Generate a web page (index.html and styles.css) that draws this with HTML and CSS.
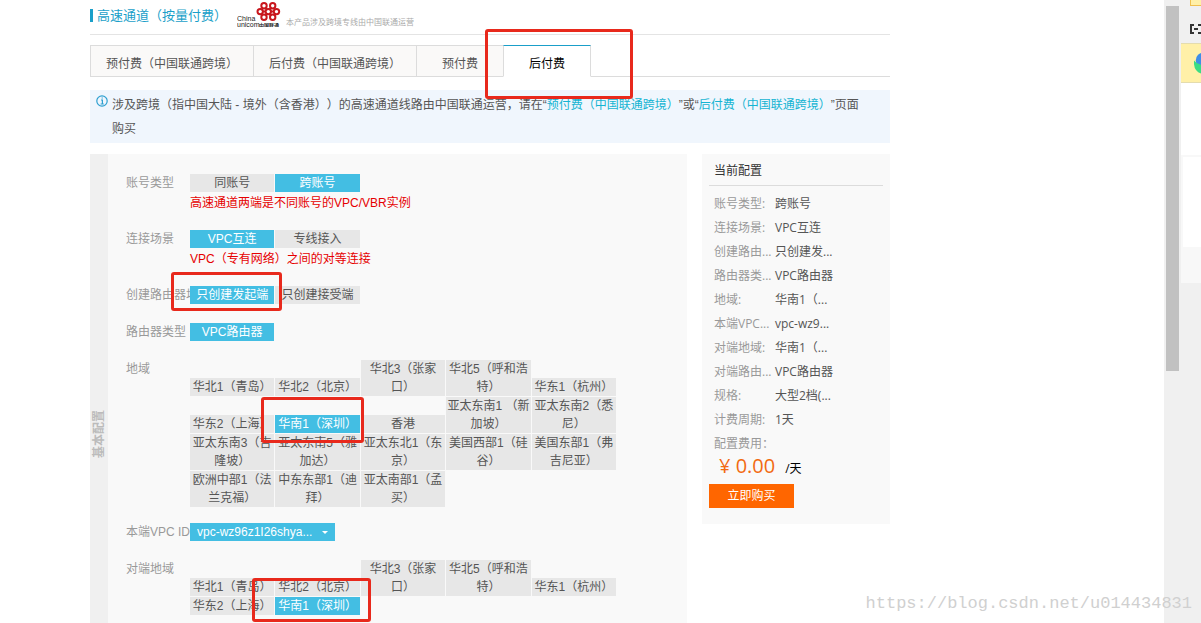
FILE: index.html
```html
<!DOCTYPE html>
<html lang="zh-CN">
<head>
<meta charset="utf-8">
<title>高速通道（按量付费）</title>
<link rel="stylesheet" href="styles.css">
</head>
<body>
<div class="screen">
  <main class="page">
    <header class="page-head">
      <h1 class="page-title">高速通道（按量付费）</h1>
      <svg class="logo" viewBox="0 0 44 26" role="img" aria-label="China unicom中国联通">
        <g fill="none" stroke="#c8161d" stroke-width="2">
          <circle cx="27" cy="4.7" r="2.7"/><circle cx="35.7" cy="4.7" r="2.7"/>
          <circle cx="23.2" cy="10.6" r="2.7"/><circle cx="31.3" cy="10.6" r="2.7"/><circle cx="39.5" cy="10.6" r="2.7"/>
          <circle cx="27" cy="16.3" r="2.7"/><circle cx="35.7" cy="16.3" r="2.7"/>
          <path d="M28.8 6.7l1 1.6M33.8 6.7l-1 1.6M28.8 14.4l1-1.6M33.8 14.4l-1-1.6M25.6 10.6h3M34 10.6h3"/>
        </g>
        <text class="logo-text" x="0" y="20">China</text>
        <text class="logo-text" x="0" y="26">unicom</text>
        <text class="logo-cn" x="22" y="26">中国联通</text>
      </svg>
      <span class="head-note">本产品涉及跨境专线由中国联通运营</span>
    </header>

    <nav class="tabs">
      <button class="tab" type="button">预付费（中国联通跨境）</button>
      <button class="tab" type="button">后付费（中国联通跨境）</button>
      <button class="tab" type="button">预付费</button>
      <button class="tab tab-active" type="button">后付费</button>
    </nav>

    <div class="notice">
      <svg class="notice-icon" viewBox="0 0 12 12" aria-hidden="true">
        <circle cx="6" cy="6" r="5.2" fill="none" stroke="#2d9fd0" stroke-width="1.2"/>
        <path d="M5 5h1.4v4M4.6 9h3.2M5.6 3h1.2" fill="none" stroke="#2d9fd0" stroke-width="1.2"/>
      </svg>
      <p class="notice-text">涉及跨境（指中国大陆 - 境外（含香港））的高速通道线路由中国联通运营，请在“<a href="#">预付费（中国联通跨境）</a>”或“<a href="#">后付费（中国联通跨境）</a>”页面购买</p>
    </div>

    <div class="columns">
      <section class="config">
        <h2 class="config-side"><span>基本配置</span></h2>
        <div class="config-body">
          <div class="row">
            <span class="label">账号类型</span>
            <div class="control">
              <div class="options">
                <button class="opt" type="button">同账号</button>
                <button class="opt opt-on" type="button">跨账号</button>
              </div>
              <p class="hint">高速通道两端是不同账号的VPC/VBR实例</p>
            </div>
          </div>
          <div class="row">
            <span class="label">连接场景</span>
            <div class="control">
              <div class="options">
                <button class="opt opt-on" type="button">VPC互连</button>
                <button class="opt" type="button">专线接入</button>
              </div>
              <p class="hint">VPC（专有网络）之间的对等连接</p>
            </div>
          </div>
          <div class="row">
            <span class="label">创建路由器场</span>
            <div class="control options">
              <button class="opt opt-on" type="button">只创建发起端</button>
              <button class="opt" type="button">只创建接受端</button>
            </div>
          </div>
          <div class="row">
            <span class="label">路由器类型</span>
            <div class="control options">
              <button class="opt opt-on" type="button">VPC路由器</button>
            </div>
          </div>
          <div class="row row-regions">
            <span class="label">地域</span>
            <div class="control options">
              <button class="opt" type="button">华北1（青岛）</button>
              <button class="opt" type="button">华北2（北京）</button>
              <button class="opt" type="button">华北3（张家口）</button>
              <button class="opt" type="button">华北5（呼和浩特）</button>
              <button class="opt" type="button">华东1（杭州）</button>
              <button class="opt" type="button">华东2（上海）</button>
              <button class="opt opt-on" type="button">华南1（深圳）</button>
              <button class="opt" type="button">香港</button>
              <button class="opt" type="button">亚太东南1 （新加坡）</button>
              <button class="opt" type="button">亚太东南2（悉尼）</button>
              <button class="opt" type="button">亚太东南3（吉隆坡）</button>
              <button class="opt" type="button">亚太东南5（雅加达）</button>
              <button class="opt" type="button">亚太东北1（东京）</button>
              <button class="opt" type="button">美国西部1（硅谷）</button>
              <button class="opt" type="button">美国东部1（弗吉尼亚）</button>
              <button class="opt" type="button">欧洲中部1（法兰克福）</button>
              <button class="opt" type="button">中东东部1（迪拜）</button>
              <button class="opt" type="button">亚太南部1（孟买）</button>
            </div>
          </div>
          <div class="row">
            <label class="label" for="vpc">本端VPC ID</label>
            <div class="control select-box">
              <select id="vpc" class="select"><option>vpc-wz96z1I26shya...</option></select>
              <svg class="caret" viewBox="0 0 6 3" aria-hidden="true"><path d="M0 0h6L3 3z" fill="#fff"/></svg>
            </div>
          </div>
          <div class="row">
            <span class="label">对端地域</span>
            <div class="control options">
              <button class="opt" type="button">华北1（青岛）</button>
              <button class="opt" type="button">华北2（北京）</button>
              <button class="opt" type="button">华北3（张家口）</button>
              <button class="opt" type="button">华北5（呼和浩特）</button>
              <button class="opt" type="button">华东1（杭州）</button>
              <button class="opt" type="button">华东2（上海）</button>
              <button class="opt opt-on" type="button">华南1（深圳）</button>
            </div>
          </div>
        </div>
      </section>

      <aside class="summary">
        <h2 class="summary-title">当前配置</h2>
        <dl class="summary-list">
          <dt>账号类型:</dt><dd>跨账号</dd>
          <dt>连接场景:</dt><dd>VPC互连</dd>
          <dt>创建路由...</dt><dd>只创建发...</dd>
          <dt>路由器类...</dt><dd>VPC路由器</dd>
          <dt>地域:</dt><dd>华南1（...</dd>
          <dt>本端VPC...</dt><dd>vpc-wz9...</dd>
          <dt>对端地域:</dt><dd>华南1（...</dd>
          <dt>对端路由...</dt><dd>VPC路由器</dd>
          <dt>规格:</dt><dd>大型2档(...</dd>
          <dt>计费周期:</dt><dd>1天</dd>
          <dt>配置费用：</dt>
        </dl>
        <p class="price"><span class="price-num">¥ 0.00</span><span>/天</span></p>
        <button class="buy" type="button">立即购买</button>
      </aside>
    </div>
  </main>

  <div class="scrollbar"><div class="thumb"></div></div>

  <div class="side-window">
    <div class="side-bar">
      <span class="side-tab"></span>
      <svg class="side-icon" viewBox="0 0 12 12" aria-hidden="true"><path d="M5 2H2v8h3M9 2h3M9 10h3M5 6h4" fill="none" stroke="#333" stroke-width="2"/></svg>
    </div>
    <div class="side-item">
      <svg class="side-avatar" viewBox="0 0 8 26" aria-hidden="true"><circle cx="11" cy="10" r="9" fill="#3f8ee8"/><path d="M0 10q3 4 8 5v10Q-1 22 0 10z" fill="#3bdc84"/></svg>
    </div>
    <div class="side-blank"></div>
    <div class="side-panel"></div>
    <div class="side-foot"></div>
  </div>

  <div class="mark mark-tab"></div>
  <div class="mark mark-initiator"></div>
  <div class="mark mark-region"></div>
  <div class="mark mark-peer"></div>
  <div class="watermark">https://blog.csdn.net/u014434831</div>
</div>
</body>
</html>
```

FILE: styles.css
```css
* { box-sizing: border-box; }

body, h1, h2, p, dl, dd { margin: 0; }

body {
  font: 12px/18px "Liberation Sans", "Noto Sans CJK SC", sans-serif;
  color: #555;
  background: #fff;
  text-spacing-trim: space-all;
}

button, select { font: inherit; text-spacing-trim: inherit; }

.screen {
  position: relative;
  display: flex;
  height: 100vh;
  overflow: hidden;
}

.page {
  flex: 1;
  min-width: 0;
  padding-left: 90px;
}

.page > * { max-width: 800px; }

.page-head {
  display: flex;
  align-items: flex-end;
  height: 35px;
  border-bottom: 1px solid #e4e4e4;
}

.page-title {
  align-self: flex-start;
  margin-top: 9px;
  padding-left: 4px;
  border-left: 3px solid #1a9fc9;
  font-size: 13px;
  line-height: 13px;
  font-weight: 400;
  color: #1a9fc9;
}

.logo {
  width: 44px;
  height: 26px;
  margin: 0 5px 7px 10px;
}

.logo-text { font-size: 7px; fill: #222; }
.logo-cn { font-size: 5px; font-weight: 700; fill: #222; }

.head-note {
  padding-bottom: 2px;
  font-size: 8px;
  color: #aaa;
}

.tabs {
  display: flex;
  margin-top: 10px;
  height: 32px;
  border-bottom: 1px solid #dcdcdc;
}

.tab {
  min-width: 87px;
  height: 32px;
  padding: 6px 15px 0;
  border: 1px solid #dcdcdc;
  border-right-width: 0;
  background: #faf9f8;
  color: #555;
}

.tab-active {
  min-width: 88px;
  border-top-color: #1a9fc9;
  border-right-width: 1px;
  border-bottom-color: #fff;
  background: #fff;
  color: #000;
}

.notice {
  display: flex;
  align-items: flex-start;
  gap: 4px;
  margin-top: 13px;
  padding: 3px 24px 2px 6px;
  background: #f0f6fd;
}

.notice-icon { flex: none; width: 12px; height: 12px; margin-top: 2px; }
.notice-text { line-height: 24px; }
.notice-text a { color: #14b4d2; text-decoration: none; }

.columns {
  display: flex;
  align-items: flex-start;
  gap: 15px;
  margin-top: 11px;
}

.config {
  display: flex;
  flex: 1;
  min-width: 0;
  min-height: 560px;
  background: #f9f9f9;
}

.config-side {
  display: flex;
  align-items: center;
  justify-content: center;
  width: 18px;
  background: #f0f0f0;
  font-size: 12px;
  line-height: 18px;
  color: #bbb;
}

.config-side span {
  writing-mode: vertical-rl;
  text-orientation: sideways;
  transform: rotate(180deg);
}

.config-body {
  display: flex;
  flex: 1;
  flex-direction: column;
  gap: 19px;
  min-width: 0;
  padding: 20px 18px;
}

.row { display: flex; }
.row-regions { margin-bottom: -3px; }

.label {
  flex: none;
  width: 64px;
  overflow: hidden;
  white-space: nowrap;
  color: #999;
}

.control { width: 426px; }

.options {
  display: grid;
  grid-template-columns: repeat(5, 1fr);
  align-items: end;
  gap: 1px;
}

.opt {
  min-height: 18px;
  padding: 0;
  border: 0;
  background: #e7e7e7;
  color: #555;
}

.opt-on { background: #43bee3; color: #fff; }

.hint { margin-top: 4px; line-height: 15px; color: #e60000; }

.select-box { position: relative; width: 145px; }

.select {
  appearance: none;
  display: block;
  width: 100%;
  height: 18px;
  padding: 0 7px;
  border: 0;
  border-radius: 0;
  background: #43bee3;
  color: #fff;
}

.caret {
  position: absolute;
  top: 8px;
  right: 7px;
  width: 6px;
  height: 3px;
}

.summary {
  width: 188px;
  padding: 8px 7px 16px;
  background: #f9f9f9;
  font-family: "Open Sans", "Noto Sans CJK SC", sans-serif;
}

.summary-title {
  padding: 0 5px 5px;
  border-bottom: 1px solid #dcdcdc;
  font-size: 12px;
  font-weight: 400;
  color: #333;
}

.summary-list {
  display: grid;
  grid-template-columns: 61px 1fr;
  padding: 6px 5px 0;
  line-height: 24px;
  white-space: nowrap;
}

.summary-list dt { color: #999; }

.price {
  display: flex;
  align-items: baseline;
  gap: 10px;
  padding-left: 10px;
  line-height: 20px;
  color: #000;
}

.price-num { font-size: 20px; color: #f26a11; }

.buy {
  display: block;
  width: 85px;
  height: 24px;
  margin-top: 5px;
  padding: 0;
  border: 0;
  background: #f60;
  color: #fff;
}

.scrollbar {
  width: 17px;
  padding: 6px 2px 0;
  background: #f0f0f0;
}

.thumb { height: 365px; background: #c1c1c1; }

.side-window {
  display: flex;
  flex-direction: column;
  width: 20px;
  background: #fff;
}

.side-bar {
  display: flex;
  flex-direction: column;
  align-items: flex-end;
  gap: 17px;
  height: 43px;
  background: #f0f0f0;
}

.side-tab {
  width: 11px;
  height: 6px;
  border: 1px solid #f0c050;
  border-width: 0 0 1px 1px;
  background: #fff0a8;
}

.side-icon { width: 12px; height: 12px; }

.side-item {
  display: flex;
  align-items: center;
  justify-content: flex-end;
  height: 40px;
  border: 1px solid #e4dcae;
  border-width: 1px 0;
  background: #fff0a8;
}

.side-avatar { width: 7px; height: 26px; }
.side-blank { height: 72px; }

.side-panel {
  height: 128px;
  border: 2px solid #f8f8f8;
  border-bottom-width: 36px;
  border-right: 0;
}

.side-foot { flex: 1; background: #f0f0f0; }

.mark {
  position: absolute;
  border: 3px solid #e8291c;
  border-radius: 3px;
}

.mark-tab { left: 485px; top: 29px; width: 148px; height: 70px; }
.mark-initiator { left: 171px; top: 272px; width: 111px; height: 39px; }
.mark-region { left: 261px; top: 397px; width: 103px; height: 46px; }
.mark-peer { left: 252px; top: 578px; width: 119px; height: 44px; }

.watermark {
  position: absolute;
  right: 9px;
  bottom: 9px;
  font: 17px/20px "Liberation Mono", monospace;
  color: #d0d0d0;
}
```
